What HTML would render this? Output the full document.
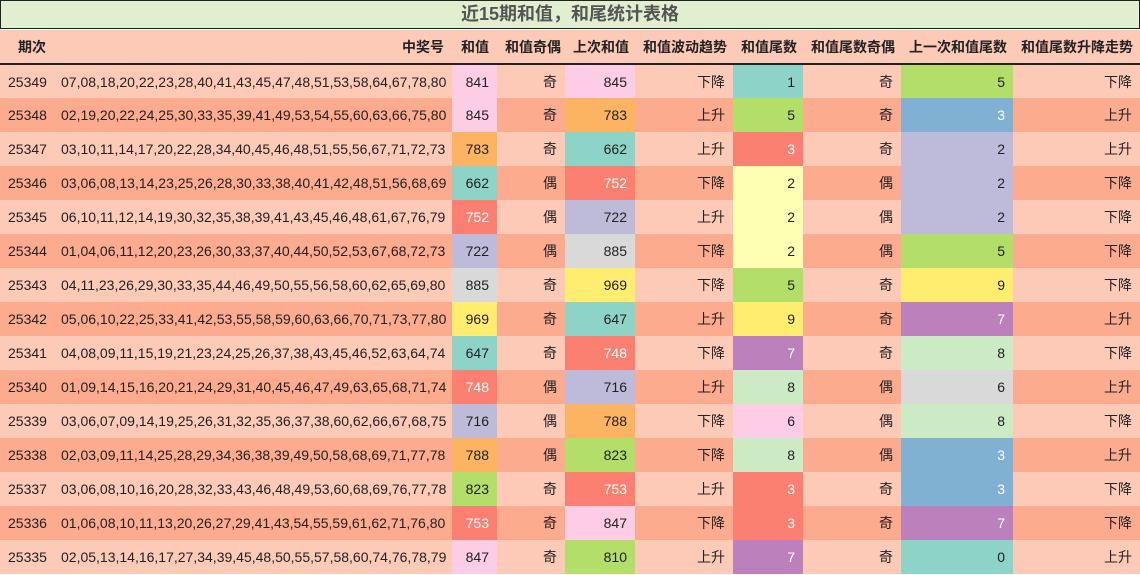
<!DOCTYPE html>
<html><head><meta charset="utf-8"><style>
*{margin:0;padding:0;box-sizing:border-box}
body{width:1140px;height:575px;background:#fff;font-family:"Liberation Sans","Noto Sans CJK SC",sans-serif;font-size:14px;color:#222;overflow:hidden}
.title{position:absolute;left:0;top:0;width:1140px;height:29px;background:#e2eed0;border:1px solid #222;text-align:center;font-weight:bold;font-size:18px;line-height:27px;color:#555}
table{position:absolute;left:0;top:30px;border-collapse:collapse;table-layout:fixed;width:1140px}
td,th{height:34px;padding:0 8px;text-align:right;white-space:nowrap;overflow:hidden}
th{background:#fdcab7;font-weight:bold;border-bottom:2px solid #222;height:34px}
th:first-child{text-align:left;padding-left:18px}
td:first-child{text-align:left}
tr.a td{background:#fdcab7}tr.b td{background:#fcab8f}
td.nums{padding:0 4px 0 6px;text-align:left}
.p{background:#fccde5!important}.o{background:#fdb462!important}.t{background:#8dd3c7!important}
.s{background:#fb8072!important;color:#fff}.v{background:#bebada!important}.g{background:#d9d9d9!important}
.y{background:#ffed6f!important}.gr{background:#b3de69!important}.pu{background:#bc80bd!important;color:#fff}
.lg{background:#ccebc5!important}.bl{background:#80b1d3!important;color:#fff}.py{background:#ffffb3!important}
</style></head><body>
<div class="title">近15期和值，和尾统计表格</div>
<table>
<colgroup><col style="width:55px"><col style="width:397px"><col style="width:45px"><col style="width:68px"><col style="width:70px"><col style="width:98px"><col style="width:70px"><col style="width:98px"><col style="width:112px"><col style="width:127px"></colgroup>
<tr><th>期次</th><th>中奖号</th><th>和值</th><th>和值奇偶</th><th>上次和值</th><th>和值波动趋势</th><th>和值尾数</th><th>和值尾数奇偶</th><th>上一次和值尾数</th><th>和值尾数升降走势</th></tr>
<tr class="a"><td>25349</td><td class="nums">07,08,18,20,22,23,28,40,41,43,45,47,48,51,53,58,64,67,78,80</td><td class="p">841</td><td>奇</td><td class="p">845</td><td>下降</td><td class="t">1</td><td>奇</td><td class="gr">5</td><td>下降</td></tr>
<tr class="b"><td>25348</td><td class="nums">02,19,20,22,24,25,30,33,35,39,41,49,53,54,55,60,63,66,75,80</td><td class="p">845</td><td>奇</td><td class="o">783</td><td>上升</td><td class="gr">5</td><td>奇</td><td class="bl">3</td><td>上升</td></tr>
<tr class="a"><td>25347</td><td class="nums">03,10,11,14,17,20,22,28,34,40,45,46,48,51,55,56,67,71,72,73</td><td class="o">783</td><td>奇</td><td class="t">662</td><td>上升</td><td class="s">3</td><td>奇</td><td class="v">2</td><td>上升</td></tr>
<tr class="b"><td>25346</td><td class="nums">03,06,08,13,14,23,25,26,28,30,33,38,40,41,42,48,51,56,68,69</td><td class="t">662</td><td>偶</td><td class="s">752</td><td>下降</td><td class="py">2</td><td>偶</td><td class="v">2</td><td>下降</td></tr>
<tr class="a"><td>25345</td><td class="nums">06,10,11,12,14,19,30,32,35,38,39,41,43,45,46,48,61,67,76,79</td><td class="s">752</td><td>偶</td><td class="v">722</td><td>上升</td><td class="py">2</td><td>偶</td><td class="v">2</td><td>下降</td></tr>
<tr class="b"><td>25344</td><td class="nums">01,04,06,11,12,20,23,26,30,33,37,40,44,50,52,53,67,68,72,73</td><td class="v">722</td><td>偶</td><td class="g">885</td><td>下降</td><td class="py">2</td><td>偶</td><td class="gr">5</td><td>下降</td></tr>
<tr class="a"><td>25343</td><td class="nums">04,11,23,26,29,30,33,35,44,46,49,50,55,56,58,60,62,65,69,80</td><td class="g">885</td><td>奇</td><td class="y">969</td><td>下降</td><td class="gr">5</td><td>奇</td><td class="y">9</td><td>下降</td></tr>
<tr class="b"><td>25342</td><td class="nums">05,06,10,22,25,33,41,42,53,55,58,59,60,63,66,70,71,73,77,80</td><td class="y">969</td><td>奇</td><td class="t">647</td><td>上升</td><td class="y">9</td><td>奇</td><td class="pu">7</td><td>上升</td></tr>
<tr class="a"><td>25341</td><td class="nums">04,08,09,11,15,19,21,23,24,25,26,37,38,43,45,46,52,63,64,74</td><td class="t">647</td><td>奇</td><td class="s">748</td><td>下降</td><td class="pu">7</td><td>奇</td><td class="lg">8</td><td>下降</td></tr>
<tr class="b"><td>25340</td><td class="nums">01,09,14,15,16,20,21,24,29,31,40,45,46,47,49,63,65,68,71,74</td><td class="s">748</td><td>偶</td><td class="v">716</td><td>上升</td><td class="lg">8</td><td>偶</td><td class="g">6</td><td>上升</td></tr>
<tr class="a"><td>25339</td><td class="nums">03,06,07,09,14,19,25,26,31,32,35,36,37,38,60,62,66,67,68,75</td><td class="v">716</td><td>偶</td><td class="o">788</td><td>下降</td><td class="p">6</td><td>偶</td><td class="lg">8</td><td>下降</td></tr>
<tr class="b"><td>25338</td><td class="nums">02,03,09,11,14,25,28,29,34,36,38,39,49,50,58,68,69,71,77,78</td><td class="o">788</td><td>偶</td><td class="gr">823</td><td>下降</td><td class="lg">8</td><td>偶</td><td class="bl">3</td><td>上升</td></tr>
<tr class="a"><td>25337</td><td class="nums">03,06,08,10,16,20,28,32,33,43,46,48,49,53,60,68,69,76,77,78</td><td class="gr">823</td><td>奇</td><td class="s">753</td><td>上升</td><td class="s">3</td><td>奇</td><td class="bl">3</td><td>下降</td></tr>
<tr class="b"><td>25336</td><td class="nums">01,06,08,10,11,13,20,26,27,29,41,43,54,55,59,61,62,71,76,80</td><td class="s">753</td><td>奇</td><td class="p">847</td><td>下降</td><td class="s">3</td><td>奇</td><td class="pu">7</td><td>下降</td></tr>
<tr class="a"><td>25335</td><td class="nums">02,05,13,14,16,17,27,34,39,45,48,50,55,57,58,60,74,76,78,79</td><td class="p">847</td><td>奇</td><td class="gr">810</td><td>上升</td><td class="pu">7</td><td>奇</td><td class="t">0</td><td>上升</td></tr>
</table>
</body></html>
